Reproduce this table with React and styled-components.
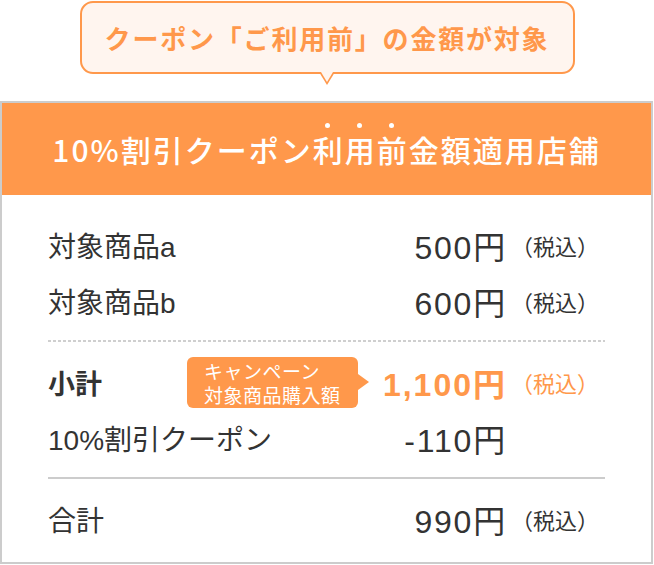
import React from "react";
import styled, { createGlobalStyle } from "styled-components";

const orange = "#ff984b";
const text = "#333333";
const line = "#cccccc";

const GlobalStyle = createGlobalStyle`
  body {
    margin: 0;
    background: #ffffff;
    font-family: "Liberation Sans", "Noto Sans CJK JP", sans-serif;
    color: ${text};
  }
`;

const Page = styled.div`
  width: 654px;
  display: flex;
  flex-direction: column;
  align-items: center;
`;

const Bubble = styled.div`
  position: relative;
  box-sizing: border-box;
  width: 495px;
  height: 73px;
  margin-top: 1px;
  border: 2px solid ${orange};
  border-radius: 13px;
  background: #fff5ef;
  display: flex;
  align-items: center;
  justify-content: center;
  color: ${orange};
  font-family: "Noto Sans CJK JP", sans-serif;
  font-size: 26px;
  font-weight: 700;
  letter-spacing: 1.8px;

  &::before,
  &::after {
    content: "";
    position: absolute;
    left: 50%;
    width: 0;
    height: 0;
    border-style: solid;
  }

  &::before {
    bottom: -13px;
    margin-left: -8px;
    border-width: 13px 8px 0 8px;
    border-color: ${orange} transparent transparent transparent;
  }

  &::after {
    bottom: -10px;
    margin-left: -6px;
    border-width: 10px 6px 0 6px;
    border-color: #fff5ef transparent transparent transparent;
  }
`;

const Box = styled.div`
  box-sizing: border-box;
  align-self: flex-start;
  width: 653px;
  margin-top: 27px;
  border: 2px solid ${line};
`;

const Header = styled.div`
  height: 92px;
  background: ${orange};
  color: #ffffff;
  display: flex;
  align-items: center;
  justify-content: center;
`;

const HeaderText = styled.div`
  font-family: "Noto Sans CJK JP", sans-serif;
  font-size: 30px;
  font-weight: 500;
  line-height: 1.2;
  letter-spacing: 2px;
  white-space: nowrap;
`;

/* 傍点: small dot centred over the character */
const Dotted = styled.span`
  position: relative;

  &::before {
    content: "";
    position: absolute;
    left: 50%;
    top: -4px;
    width: 5px;
    height: 5px;
    margin-left: -3.5px;
    border-radius: 50%;
    background: #ffffff;
  }
`;

const Body = styled.div`
  padding: 22px 46px 15px;
`;

const Row = styled.div`
  height: 56px;
  display: flex;
  align-items: center;
`;

const Label = styled.div`
  flex: 1;
  font-size: ${(p) => (p.bold ? "27px" : "28px")};
  font-weight: ${(p) => (p.bold ? 700 : 400)};
  white-space: nowrap;
`;

const Price = styled.div`
  font-size: 32px;
  letter-spacing: ${(p) => (p.accent ? "2px" : "1.8px")};
  font-weight: ${(p) => (p.accent ? 700 : 400)};
  color: ${(p) => (p.accent ? orange : text)};
  white-space: nowrap;
`;

const Tax = styled.div`
  width: 94px;
  padding-left: 4px;
  font-family: "Noto Sans CJK JP", sans-serif;
  font-size: 22px;
  color: ${(p) => (p.accent ? orange : text)};
  white-space: nowrap;
`;

const Badge = styled.div`
  position: relative;
  box-sizing: border-box;
  width: 171px;
  height: 51px;
  margin-right: 25px;
  padding: 2px 0 0 17px;
  border-radius: 6px;
  background: ${orange};
  color: #ffffff;
  font-family: "Noto Sans CJK JP", sans-serif;
  font-size: 19px;
  line-height: 24px;
  letter-spacing: 0.5px;

  &::after {
    content: "";
    position: absolute;
    right: -11px;
    top: 50%;
    margin-top: -8px;
    border-style: solid;
    border-width: 8px 0 8px 11px;
    border-color: transparent transparent transparent ${orange};
  }
`;

const BadgeLine = styled.div`
  white-space: nowrap;
`;

const Divider = styled.div`
  height: 2px;
  margin: 11px 0 12px;
  background: ${(p) =>
    p.dotted
      ? `repeating-linear-gradient(to right, #cfcfcf 0 3px, transparent 3px 5px)`
      : line};
`;

const items = [
  { name: "対象商品a", price: "500円" },
  { name: "対象商品b", price: "600円" },
];

export default function App() {
  return (
    <>
      <GlobalStyle />
      <Page>
        <Bubble>クーポン「ご利用前」の金額が対象</Bubble>
        <Box>
          <Header>
            <HeaderText>
              10%割引クーポン
              {"利用前".split("").map((c) => (
                <Dotted key={c}>{c}</Dotted>
              ))}
              金額適用店舗
            </HeaderText>
          </Header>
          <Body>
            {items.map((item) => (
              <Row key={item.name}>
                <Label>{item.name}</Label>
                <Price>{item.price}</Price>
                <Tax>（税込）</Tax>
              </Row>
            ))}
            <Divider dotted />
            <Row>
              <Label bold>小計</Label>
              <Badge>
                <BadgeLine>キャンペーン</BadgeLine>
                <BadgeLine>対象商品購入額</BadgeLine>
              </Badge>
              <Price accent>1,100円</Price>
              <Tax accent>（税込）</Tax>
            </Row>
            <Row>
              <Label>10%割引クーポン</Label>
              <Price>-110円</Price>
              <Tax />
            </Row>
            <Divider />
            <Row>
              <Label>合計</Label>
              <Price>990円</Price>
              <Tax>（税込）</Tax>
            </Row>
          </Body>
        </Box>
      </Page>
    </>
  );
}
